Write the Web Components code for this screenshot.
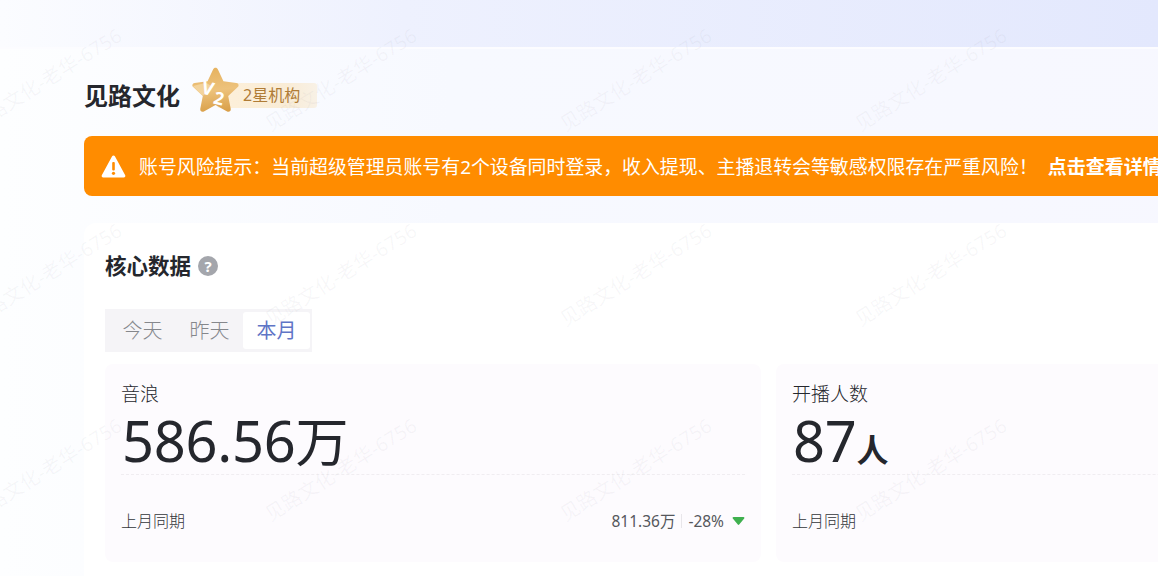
<!DOCTYPE html>
<html>
<head>
<meta charset="utf-8">
<style>
  html, body { margin: 0; height: 576px; overflow: hidden; }
  body { font-family: "Noto Sans", "Noto Sans CJK SC", sans-serif; background: #f7f8ff; }
</style>
</head>
<body>
<app-page>
  <org-head slot="head" name="见路文化" level="2星机构"></org-head>
  <risk-alert slot="alert" link="点击查看详情">账号风险提示：当前超级管理员账号有2个设备同时登录，收入提现、主播退转会等敏感权限存在严重风险！</risk-alert>
  <core-panel slot="panel" heading="核心数据">
    <stat-card label="音浪" value="586.56" unit="万" prev="811.36万" change="-28%"></stat-card>
    <stat-card label="开播人数" value="87" unit="人"></stat-card>
  </core-panel>
</app-page>
<water-marks></water-marks>

<script>
const pageTpl = document.createElement('template')
pageTpl.innerHTML = `
  <style>
    :host { display: block; width: 1158px; height: 576px; overflow: hidden; }
    .top { height: 47px; background: linear-gradient(90deg, #fbfcff 0%, #eef1fe 35%, #e3e8fd 100%); }
    .main {
      height: 529px; box-sizing: border-box; padding: 0 0 0 84px;
      border-top: 2px solid #fcfcff;
      background: linear-gradient(90deg, #fdfeff 0%, #f7f9ff 30%, #f7f7ff 100%);
      display: flex; flex-direction: column; width: 1500px;
    }
  </style>
  <div class="top"></div>
  <div class="main">
    <slot name="head"></slot>
    <slot name="alert"></slot>
    <slot name="panel"></slot>
  </div>`

class AppPage extends HTMLElement {
  constructor() {
    super()
    this.attachShadow({ mode: 'open' }).appendChild(pageTpl.content.cloneNode(true))
  }
}

const headTpl = document.createElement('template')
headTpl.innerHTML = `
  <style>
    :host { display: flex; flex: none; align-items: center; height: 87px; box-sizing: border-box; padding-top: 6px; }
    h1 { margin: 0; font-size: 24px; line-height: 32px; font-weight: 700; color: #25272d; }
    .badge { display: flex; align-items: center; margin-left: 9px; }
    svg { width: 53px; height: 53px; margin-bottom: 9px; position: relative; z-index: 1; flex: none; }
    .tag {
      margin-left: -25px; height: 25px; line-height: 25px; padding: 0 17px 0 26px;
      font-size: 16px; color: #b07c36; border-radius: 3px;
      background: linear-gradient(90deg, #fdf0da 0%, #f9ecd6 70%, #f8f1e6 100%);
    }
  </style>
  <h1></h1>
  <div class="badge">
    <svg viewBox="0 0 48 48">
      <defs>
        <linearGradient id="st" x1=".45" y1="0" x2=".55" y2="1">
          <stop offset="0" stop-color="#e6b25f"/>
          <stop offset=".5" stop-color="#edc27c"/>
          <stop offset="1" stop-color="#d99f48"/>
        </linearGradient>
      </defs>
      <path d="M24 2.500c1 0 1.700.6 2.200 1.600l5 10.700 11.700 1.500c2 .3 2.700 2.400 1.300 3.700l-8.700 8 2.300 11.700c.4 2-1.600 3.400-3.300 2.400L24 36.300 13.500 42.100c-1.700 1-3.700-.4-3.300-2.400l2.300-11.700-8.700-8c-1.400-1.300-.7-3.400 1.300-3.700l11.700-1.500 5-10.700c.5-1 1.200-1.600 2.200-1.600z" fill="url(#st)"/>
      <path d="M3.500 19l12-3 6 4-9 8z" fill="#f7dcab" opacity=".7"/>
      <text x="11.500" y="27" transform="rotate(14 17 21)" font-family="Noto Sans, sans-serif" font-size="17" font-weight="700" fill="#fff">V</text>
      <text x="22.500" y="36" transform="rotate(14 27 30)" font-family="Noto Sans, sans-serif" font-size="16" font-weight="700" fill="#fff">2</text>
    </svg>
    <div class="tag"></div>
  </div>`

class OrgHead extends HTMLElement {
  constructor() {
    super()
    this.attachShadow({ mode: 'open' }).appendChild(headTpl.content.cloneNode(true))
    this.shadowRoot.querySelector('h1').innerText = this.getAttribute('name')
    this.shadowRoot.querySelector('.tag').innerText = this.getAttribute('level')
  }
}

const alertTpl = document.createElement('template')
alertTpl.innerHTML = `
  <style>
    :host {
      display: flex; flex: none; align-items: center; height: 60px; box-sizing: border-box;
      padding-left: 17px; border-radius: 8px; background: #ff8c00; color: #fff;
      font-size: 18.900px; white-space: nowrap;
    }
    svg { width: 25px; height: 25px; flex: none; margin-right: 13px; }
    b { margin-left: 10px; font-weight: 700; font-size: 19px; }
  </style>
  <svg viewBox="0 0 25 25">
    <path d="M12.500 1.500c.6 0 1.100.3 1.400.8l10.300 19c.5 1-.2 2.200-1.400 2.200H2.200C1 23.500.3 22.300.8 21.300l10.300-19c.3-.5.8-.8 1.400-.8z" fill="#fff"/>
    <rect x="11.200" y="8" width="2.600" height="8.500" rx="1" fill="#ff8c00"/>
    <circle cx="12.500" cy="19.300" r="1.600" fill="#ff8c00"/>
  </svg>
  <span><slot></slot></span><b></b>`

class RiskAlert extends HTMLElement {
  constructor() {
    super()
    this.attachShadow({ mode: 'open' }).appendChild(alertTpl.content.cloneNode(true))
    this.shadowRoot.querySelector('b').innerText = this.getAttribute('link')
  }
}

const panelTpl = document.createElement('template')
panelTpl.innerHTML = `
  <style>
    :host {
      display: block; flex: none; margin-top: 27px; padding: 0 21px; height: 400px;
      background: #fff; border-radius: 12px 0 0 0;
    }
    .title { display: flex; align-items: center; height: 86px; }
    h2 { margin: 0; font-size: 21.500px; font-weight: 700; color: #25272d; line-height: 28px; }
    .help {
      width: 20px; height: 20px; margin-left: 7px; border-radius: 50%; background: #a4a6ac;
      color: #fff; font-size: 15px; font-weight: 700; line-height: 20px; text-align: center;
    }
    .tabs {
      display: inline-flex; height: 43px; box-sizing: border-box; padding: 3px 2px 3px 4px;
      background: #f5f4f7; margin-bottom: 12px;
    }
    .tab {
      width: 67px; text-align: center; font-size: 20px; line-height: 37px; color: #85878c; font-weight: 300;
    }
    .tab.on { background: #fff; color: #5f75c6; border-radius: 3px; font-weight: 400; }
    .stats { display: grid; grid-template-columns: 656px 656px; gap: 15px; }
  </style>
  <div class="title"><h2></h2><span class="help">?</span></div>
  <div class="tabs">
    <span class="tab">今天</span><span class="tab">昨天</span><span class="tab on">本月</span>
  </div>
  <div class="stats"><slot></slot></div>`

class CorePanel extends HTMLElement {
  constructor() {
    super()
    this.attachShadow({ mode: 'open' }).appendChild(panelTpl.content.cloneNode(true))
    this.shadowRoot.querySelector('h2').innerText = this.getAttribute('heading')
  }
}

const statTpl = document.createElement('template')
statTpl.innerHTML = `
  <style>
    :host {
      display: block; height: 198px; box-sizing: border-box; padding: 16px 16px 0;
      background: #fdfbfe; border-radius: 8px; color: #25272d;
    }
    .label { font-size: 19px; line-height: 28px; color: #25272d; font-weight: 300; }
    .value { font-size: 56px; line-height: 64px; height: 66px; white-space: nowrap; letter-spacing: -.3px; padding-left: 1px; }
    .unit { font-size: 53px; }
    .unit.small { font-size: 32px; font-weight: 700; }
    .line { border-top: 1px dashed #f0edf1; }
    .foot {
      display: flex; align-items: center; justify-content: space-between;
      margin-top: 34px; font-size: 16px; line-height: 24px; color: #33353a; font-weight: 300;
    }
    .nums { display: flex; align-items: center; font-size: 15.500px; font-weight: 400; color: #55575c; }
    .sep { width: 1px; height: 14px; background: #e8e6ea; margin: 0 6px; }
    .arrow { margin-left: 8px; }
  </style>
  <div class="label"></div>
  <div class="value"><span class="num"></span><span class="unit"></span></div>
  <div class="line"></div>
  <div class="foot">
    <span>上月同期</span>
    <span class="nums"></span>
  </div>`

class StatCard extends HTMLElement {
  constructor() {
    super()
    this.attachShadow({ mode: 'open' }).appendChild(statTpl.content.cloneNode(true))
    const root = this.shadowRoot
    root.querySelector('.label').innerText = this.getAttribute('label')
    root.querySelector('.num').innerText = this.getAttribute('value')
    const unit = root.querySelector('.unit')
    unit.innerText = this.getAttribute('unit')
    if (this.getAttribute('unit') === '人') unit.classList.add('small')
    if (this.getAttribute('prev')) {
      root.querySelector('.nums').innerHTML = `
        <span>${this.getAttribute('prev')}</span><i class="sep"></i><span>${this.getAttribute('change')}</span>
        <svg class="arrow" width="13" height="10" viewBox="0 0 13 10"><path d="M1.500 1h10c.8 0 1.200.8.700 1.400L7.200 8.600c-.4.5-1 .5-1.400 0L.8 2.400C.3 1.800.7 1 1.500 1z" fill="#3fb04f"/></svg>`
    }
  }
}

// watermark lies over everything, fixed tiles
const markTpl = document.createElement('template')
markTpl.innerHTML = `
  <style>
    :host { position: absolute; left: 0; top: 0; width: 1158px; height: 576px; overflow: hidden; pointer-events: none; }
    span {
      position: absolute; width: 200px; text-align: center; white-space: nowrap;
      font-size: 19.500px; color: rgba(120, 120, 140, .06); transform: rotate(-32deg);
    }
  </style>`

class WaterMarks extends HTMLElement {
  constructor() {
    super()
    this.attachShadow({ mode: 'open' }).appendChild(markTpl.content.cloneNode(true))
    for (let r = 0; r < 3; r++) {
      for (let c = 0; c < 4; c++) {
        const s = document.createElement('span')
        s.innerText = '见路文化-老华-6756'
        s.style.left = (-55 + c * 295) + 'px'
        s.style.top = (64 + r * 195) + 'px'
        this.shadowRoot.appendChild(s)
      }
    }
  }
}

customElements.define('app-page', AppPage)
customElements.define('org-head', OrgHead)
customElements.define('risk-alert', RiskAlert)
customElements.define('core-panel', CorePanel)
customElements.define('stat-card', StatCard)
customElements.define('water-marks', WaterMarks)
</script>
</body>
</html>
